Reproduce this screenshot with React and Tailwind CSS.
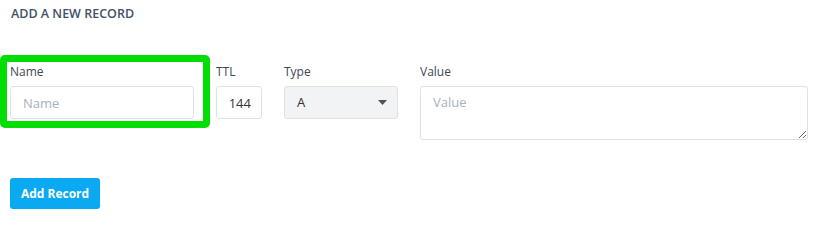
import React from "react";

const label = "block text-[12px] leading-[18px] text-[#3d4852] mb-[5px]";
const field =
  "block h-[33px] rounded-[3px] border border-[#dde2e6] bg-white px-3 text-[13px] text-[#333] placeholder:text-[#a9b1b9] outline-none";

export default function App() {
  return (
    <div className="w-[824px] h-[215px] overflow-hidden bg-white font-['Open_Sans',sans-serif] pt-[6px]">
      <h4 className="pl-[11px] text-[12.5px] font-semibold leading-[16px] text-[#3f5266]">
        ADD A NEW RECORD
      </h4>

      <div className="flex items-start pl-[10px] pt-[41px] gap-[22px]">
        <div className="relative w-[184px]">
          <div className="absolute -left-[10px] -top-[8px] w-[210px] h-[73px] rounded-[5px] border-[7px] border-[#00dd00] pointer-events-none"></div>
          <label className={label}>Name</label>
          <input className={field + " w-full"} placeholder="Name" />
        </div>

        <div className="w-[46px]">
          <label className={label}>TTL</label>
          <input className={field + " w-full px-[10px] text-right"} defaultValue="144" />
        </div>

        <div className="w-[114px]">
          <label className={label}>Type</label>
          <div className="h-[33px] rounded-[3px] border border-[#dde2e6] bg-[#f1f3f5] pl-[12px] pr-[10px] flex items-center justify-between text-[13px] text-[#333]">
            <span>A</span>
            <svg width="9" height="5" viewBox="0 0 9 5">
              <path d="M0 0h9L4.5 5z" fill="#4a5560" />
            </svg>
          </div>
        </div>

        <div className="w-[388px]">
          <label className={label}>Value</label>
          <textarea
            className="block w-full h-[54px] rounded-[3px] border border-[#dde2e6] bg-white px-3 py-[6px] text-[13px] leading-[18px] text-[#333] placeholder:text-[#a9b1b9] outline-none"
            placeholder="Value"
          ></textarea>
        </div>
      </div>

      <div className="pl-[10px] pt-[38px]">
        <button className="block h-[31px] w-[90px] rounded-[3px] bg-[#0aaaf2] text-white text-[12px] font-bold">
          Add Record
        </button>
      </div>
    </div>
  );
}
